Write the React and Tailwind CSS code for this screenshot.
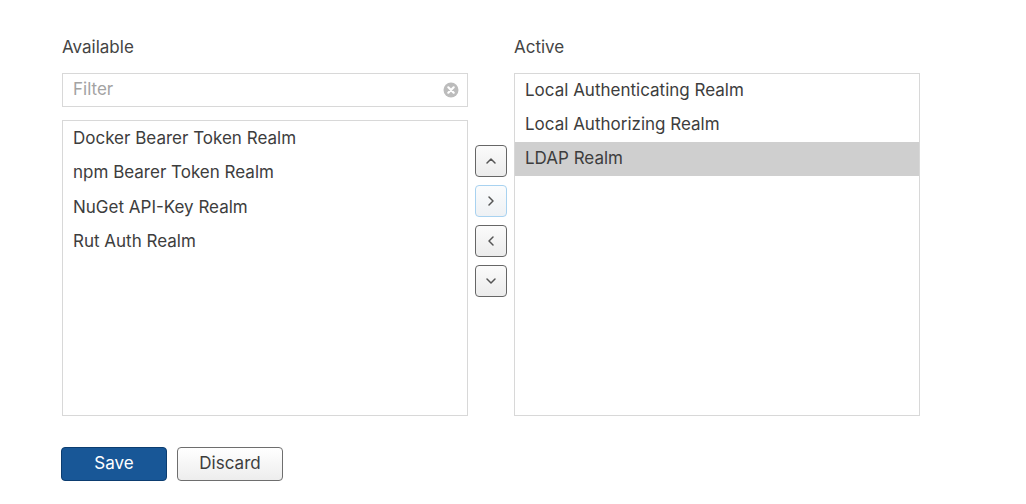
import React from "react";

const available = ["Docker Bearer Token Realm", "npm Bearer Token Realm", "NuGet API-Key Realm", "Rut Auth Realm"];
const active = ["Local Authenticating Realm", "Local Authorizing Realm", "LDAP Realm"];

function Chevron({ dir }) {
  const paths = {
    up: "M2 8 L6 4 L10 8",
    down: "M2 4 L6 8 L10 4",
    right: "M4 2 L8 6 L4 10",
    left: "M8 2 L4 6 L8 10",
  };
  return (
    <svg width="12" height="12" viewBox="0 0 12 12" fill="none">
      <path d={paths[dir]} stroke="#555" strokeWidth="1.5" strokeLinecap="round" strokeLinejoin="round" />
    </svg>
  );
}

function MoveButton({ dir, focused }) {
  return (
    <button
      className={
        focused
          ? "w-[32px] h-[32px] flex items-center justify-center rounded-[4px] border-[1.5px] border-[#a8d2f0] bg-gradient-to-b from-[#fbfcfd] to-[#eef1f4]"
          : "w-[32px] h-[32px] flex items-center justify-center rounded-[4px] border-[1.5px] border-[#666] bg-gradient-to-b from-[#fbfbfb] to-[#ececec]"
      }
    >
      <Chevron dir={dir} />
    </button>
  );
}

export default function App() {
  return (
    <div className="w-[1026px] h-[504px] bg-white pl-[62px] pt-[37px] text-[#3d3d3d] font-['Inter',sans-serif] text-[17px]">
      <div className="flex">
        <div className="w-[406px] flex flex-col">
          <div className="h-[20px] leading-[20px] mb-[16px] text-[17px] text-[#444]">Available</div>
          <div className="h-[34px] border border-[#d8d8d8] flex items-center pl-[10px] pr-[8px]">
            <span className="flex-1 text-[#a3a3a3]">Filter</span>
            <svg width="16" height="16" viewBox="0 0 16 16">
              <circle cx="8" cy="8" r="7.5" fill="#bcbcbc" />
              <path d="M5.3 5.3 L10.7 10.7 M10.7 5.3 L5.3 10.7" stroke="#fff" strokeWidth="2.2" strokeLinecap="round" />
            </svg>
          </div>
          <div className="mt-[13px] h-[296px] border border-[#d8d8d8]">
            {available.map((t) => (
              <div key={t} className="h-[34.5px] flex items-center pl-[10px]">{t}</div>
            ))}
          </div>
        </div>
        <div className="w-[46px] flex flex-col items-center pt-[108px] gap-[8px]">
          <MoveButton dir="up" />
          <MoveButton dir="right" focused />
          <MoveButton dir="left" />
          <MoveButton dir="down" />
        </div>
        <div className="w-[406px] flex flex-col">
          <div className="h-[20px] leading-[20px] mb-[16px] text-[17px] text-[#444]">Active</div>
          <div className="h-[343px] border border-[#d8d8d8]">
            {active.map((t, i) => (
              <div
                key={t}
                className={
                  i === 2
                    ? "h-[34px] flex items-center pl-[10px] bg-[#cfcfcf]"
                    : "h-[34px] flex items-center pl-[10px]"
                }
              >
                {t}
              </div>
            ))}
          </div>
        </div>
      </div>
      <div className="flex gap-[10px] mt-[31px] ml-[-1px]">
        <button className="w-[106px] h-[34px] rounded-[4px] border border-[#0c3d70] bg-[#185797] text-white text-[17px]">
          Save
        </button>
        <button className="w-[106px] h-[34px] rounded-[4px] border border-[#6e6e6e] bg-gradient-to-b from-[#ffffff] to-[#ededed] text-[#3d3d3d] text-[17px]">
          Discard
        </button>
      </div>
    </div>
  );
}
